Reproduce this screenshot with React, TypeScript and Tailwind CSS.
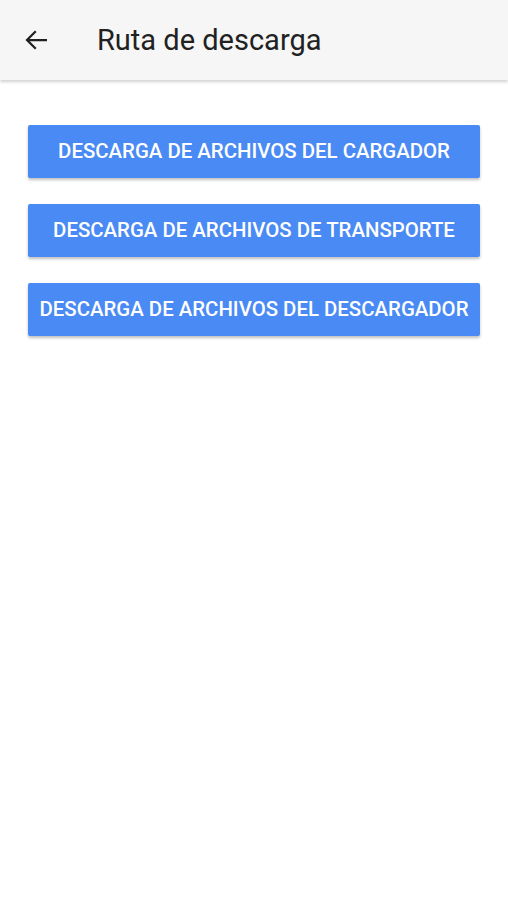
import React from "react";

const buttons = [
  "DESCARGA DE ARCHIVOS DEL CARGADOR",
  "DESCARGA DE ARCHIVOS DE TRANSPORTE",
  "DESCARGA DE ARCHIVOS DEL DESCARGADOR",
];

export default function App() {
  return (
    <div className="min-h-[900px] bg-white font-['Roboto',sans-serif]">
      {/* Toolbar */}
      <header className="flex h-[80px] items-center bg-[#f6f6f6] shadow-[0_2px_3px_rgba(0,0,0,0.18)]">
        <button className="ml-[22px] flex h-[30px] w-[30px] items-center justify-center text-[#212121]">
          <svg width="30" height="30" viewBox="0 0 24 24" fill="none" stroke="currentColor" strokeWidth="1.8">
            <path d="M20 12H4.5M11 5l-7 7 7 7" />
          </svg>
        </button>
        <h1 className="ml-[45px] text-[29px] leading-none text-[#212121]">Ruta de descarga</h1>
      </header>

      {/* Buttons */}
      <main className="flex flex-col gap-[26px] px-[28px] pt-[45px]">
        {buttons.map((label) => (
          <button
            key={label}
            className="flex h-[53px] w-full items-center justify-center rounded-[2px] bg-[#4a8af4] text-[20.4px] font-medium text-white shadow-[0_2px_3px_rgba(0,0,0,0.25)]"
          >
            {label}
          </button>
        ))}
      </main>
    </div>
  );
}
